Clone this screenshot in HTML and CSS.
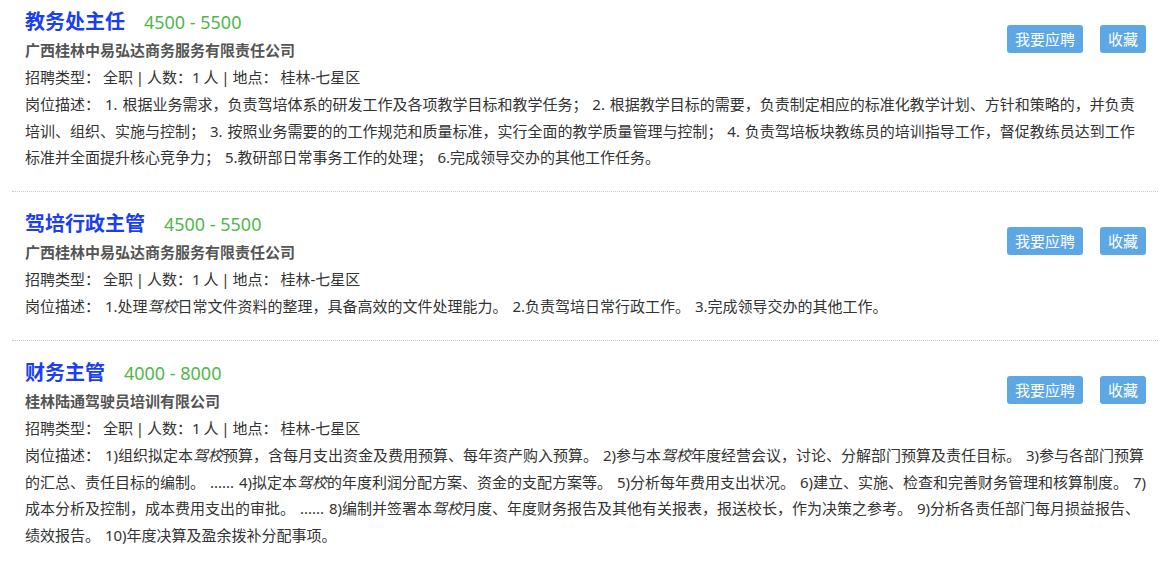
FILE: index.html
```html
<!DOCTYPE html>
<html lang="zh-CN">
<head>
    <meta charset="UTF-8">
    <meta name="viewport" content="width=device-width, initial-scale=1.0">
    <title>招聘信息</title>
    <link rel="stylesheet" href="styles.css">
</head>
<body>
    <div class="job-list">
        <div class="job-item">
            <div class="job-head">
                <div class="job-info">
                    <div class="job-title">
                        <a href="#" class="job-name">教务处主任</a>
                        <span class="job-salary">4500 - 5500</span>
                    </div>
                    <div class="job-company">广西桂林中易弘达商务服务有限责任公司</div>
                    <div class="job-meta">招聘类型： 全职 | 人数：1 人 | 地点： 桂林-七星区</div>
                </div>
                <div class="job-actions">
                    <button class="btn">我要应聘</button>
                    <button class="btn">收藏</button>
                </div>
            </div>
            <div class="job-desc">岗位描述： 1. 根据业务需求，负责驾培体系的研发工作及各项教学目标和教学任务； 2. 根据教学目标的需要，负责制定相应的标准化教学计划、方针和策略的，并负责培训、组织、实施与控制； 3. 按照业务需要的的工作规范和质量标准，实行全面的教学质量管理与控制； 4. 负责驾培板块教练员的培训指导工作，督促教练员达到工作标准并全面提升核心竞争力； 5.教研部日常事务工作的处理； 6.完成领导交办的其他工作任务。</div>
        </div>

        <div class="job-item">
            <div class="job-head">
                <div class="job-info">
                    <div class="job-title">
                        <a href="#" class="job-name">驾培行政主管</a>
                        <span class="job-salary">4500 - 5500</span>
                    </div>
                    <div class="job-company">广西桂林中易弘达商务服务有限责任公司</div>
                    <div class="job-meta">招聘类型： 全职 | 人数：1 人 | 地点： 桂林-七星区</div>
                </div>
                <div class="job-actions">
                    <button class="btn">我要应聘</button>
                    <button class="btn">收藏</button>
                </div>
            </div>
            <div class="job-desc">岗位描述： 1.处理<em>驾校</em>日常文件资料的整理，具备高效的文件处理能力。 2.负责驾培日常行政工作。 3.完成领导交办的其他工作。</div>
        </div>

        <div class="job-item">
            <div class="job-head">
                <div class="job-info">
                    <div class="job-title">
                        <a href="#" class="job-name">财务主管</a>
                        <span class="job-salary">4000 - 8000</span>
                    </div>
                    <div class="job-company">桂林陆通驾驶员培训有限公司</div>
                    <div class="job-meta">招聘类型： 全职 | 人数：1 人 | 地点： 桂林-七星区</div>
                </div>
                <div class="job-actions">
                    <button class="btn">我要应聘</button>
                    <button class="btn">收藏</button>
                </div>
            </div>
            <div class="job-desc">岗位描述： 1)组织拟定本<em>驾校</em>预算，含每月支出资金及费用预算、每年资产购入预算。 2)参与本<em>驾校</em>年度经营会议，讨论、分解部门预算及责任目标。 3)参与各部门预算的汇总、责任目标的编制。 ...... 4)拟定本<em>驾校</em>的年度利润分配方案、资金的支配方案等。 5)分析每年费用支出状况。 6)建立、实施、检查和完善财务管理和核算制度。 7)成本分析及控制，成本费用支出的审批。 ...... 8)编制并签署本<em>驾校</em>月度、年度财务报告及其他有关报表，报送校长，作为决策之参考。 9)分析各责任部门每月损益报告、绩效报告。 10)年度决算及盈余拨补分配事项。</div>
        </div>
    </div>
</body>
</html>
```

FILE: styles.css
```css
body {
    margin: 0;
    font-family: "Noto Sans", "Noto Sans CJK SC", sans-serif;
    font-size: 15px;
    color: #333;
    background: #fff;
}
.job-list {
    margin: 0 6px 0 12px;
}
.job-item {
    padding: 17px 12px 20px 13px;
    border-bottom: 1px dotted #c8c8c8;
}
.job-item:first-child {
    padding-top: 7px;
}
.job-head {
    display: flex;
    justify-content: space-between;
}
.job-title {
    line-height: 30px;
    height: 30px;
}
.job-name {
    font-size: 20px;
    font-weight: bold;
    color: #1a3ef2;
    text-decoration: none;
}
.job-salary {
    margin-left: 15px;
    font-size: 18px;
    color: #4fb84a;
}
.job-company {
    font-weight: bold;
    color: #555;
    line-height: 27px;
}
.job-meta {
    line-height: 27px;
    word-spacing: -1px;
}
.job-actions {
    display: flex;
    gap: 17px;
    margin-top: 18px;
    align-self: flex-start;
}
.btn {
    height: 28px;
    padding: 0 8px;
    border: none;
    border-radius: 3px;
    background-color: #5ea7e5;
    color: #fff;
    font-family: inherit;
    font-size: 15px;
    line-height: 28px;
    cursor: pointer;
}
.job-desc {
    line-height: 26.7px;
    word-spacing: 1px;
}
.job-desc em {
    font-style: italic;
}
```
